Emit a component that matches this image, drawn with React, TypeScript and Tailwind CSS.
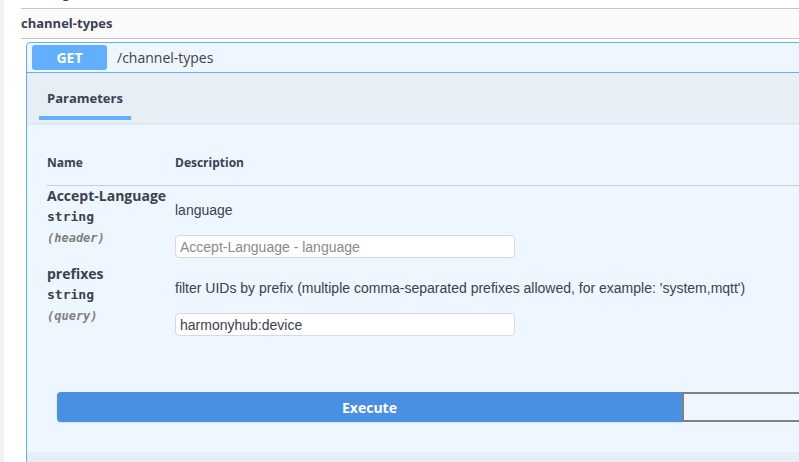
import React from 'react';

const params = [
  {
    name: 'Accept-Language',
    type: 'string',
    place: '(header)',
    description: 'language',
    value: '',
    placeholder: 'Accept-Language - language',
  },
  {
    name: 'prefixes',
    type: 'string',
    place: '(query)',
    description:
      "filter UIDs by prefix (multiple comma-separated prefixes allowed, for example: 'system,mqtt')",
    value: 'harmonyhub:device',
    placeholder: 'prefixes',
  },
];

function ParamRow({ p, tall }: { p: (typeof params)[number]; tall: boolean }) {
  return (
    <div className={tall ? 'flex h-[78px]' : 'flex h-[77px]'}>
      <div className="w-[128px] shrink-0">
        <div className="h-[20px] leading-[20px] text-[14px] font-bold font-['Open_Sans',sans-serif] text-[#3b4151]">
          {p.name}
        </div>
        <div className="h-[22px] leading-[22px] text-[13px] font-semibold font-['DejaVu_Sans_Mono',monospace] text-[#3b4151]">
          {p.type}
        </div>
        <div className="h-[20px] leading-[20px] text-[12px] italic font-semibold font-['DejaVu_Sans_Mono',monospace] text-[#808080]">
          {p.place}
        </div>
      </div>
      <div className="pt-[14px]">
        <div className="h-[20px] leading-[20px] text-[14px] font-['Liberation_Sans',Arial,sans-serif] text-[#3b4151] whitespace-nowrap">
          {p.description}
        </div>
        <input
          className="mt-[15px] w-[340px] h-[23px] px-[4px] rounded-[4px] border border-[#d9d9d9] bg-white text-[14px] font-['Liberation_Sans',Arial,sans-serif] text-[#3b4151] placeholder:text-[#8a8a8a] outline-none"
          defaultValue={p.value}
          placeholder={p.placeholder}
        />
      </div>
    </div>
  );
}

export default function App() {
  return (
    <div className="w-[799px] h-[462px] overflow-hidden bg-white flex">
      <div className="w-[4px] shrink-0 bg-[#f1f1f1]" />
      <div className="pl-[17px] w-[1320px] shrink-0 -mt-[21px]">
        {/* previous tag, mostly scrolled out */}
        <div className="h-[30px] border-b border-[#c4c4c4] flex items-center">
          <span className="text-[13px] font-bold font-['Open_Sans',sans-serif] text-[#3b4151]">bindings</span>
        </div>
        <div className="h-[30px] border-b border-[#c4c4c4] bg-[#fafafa] flex items-center">
          <span className="text-[13px] font-bold font-['Open_Sans',sans-serif] text-[#3b4151]">channel-types</span>
        </div>

        {/* operation block */}
        <div className="mt-[3px] ml-[5px] border border-[#61affe] rounded-t-[4px] bg-[#eef6ff]">
          <div className="flex items-center py-[2px] pl-[5px] border-b border-[#61affe]">
            <div className="w-[75px] h-[25px] rounded-[3px] bg-[#61affe] flex items-center justify-center text-[14px] font-bold font-['Open_Sans',sans-serif] text-white">
              GET
            </div>
            <span className="ml-[10px] text-[14px] font-['Open_Sans',sans-serif] text-[#3b4151]">/channel-types</span>
          </div>

          <div className="h-[50px] bg-[#e8eef6] shadow-[0_1px_2px_rgba(0,0,0,0.1)] pl-[20px] pt-[12px]">
            <div className="inline-flex flex-col">
              <span className="h-[20px] leading-[20px] text-[13px] font-bold font-['Open_Sans',sans-serif] text-[#3b4151]">
                Parameters
              </span>
              <div className="mt-[8px] -mx-[8px] h-[4px] bg-[#61affe]" />
            </div>
          </div>

          <div className="pl-[20px] pt-[32px]">
            <div className="flex border-b border-[#c9cdd3] pb-[14px] text-[12px] leading-[16px] font-bold font-['Open_Sans',sans-serif] text-[#3b4151]">
              <div className="w-[128px]">Name</div>
              <div>Description</div>
            </div>
            {params.map((p, i) => (
              <ParamRow key={p.name} p={p} tall={i === 0} />
            ))}
          </div>

          <div className="flex pl-[30px] pt-[51px] pb-[30px]">
            <button className="w-[625px] h-[30px] rounded-l-[4px] bg-[#4990e2] text-white text-[14px] font-bold font-['Open_Sans',sans-serif] shadow-[0_1px_2px_rgba(0,0,0,0.1)]">
              Execute
            </button>
            <button className="w-[625px] h-[30px] rounded-r-[4px] border-2 border-[#808080] bg-transparent text-[14px] font-bold font-['Open_Sans',sans-serif] text-[#3b4151]">
              Clear
            </button>
          </div>

          <div className="h-[40px] bg-[#e8eef6]" />
        </div>
      </div>
    </div>
  );
}
